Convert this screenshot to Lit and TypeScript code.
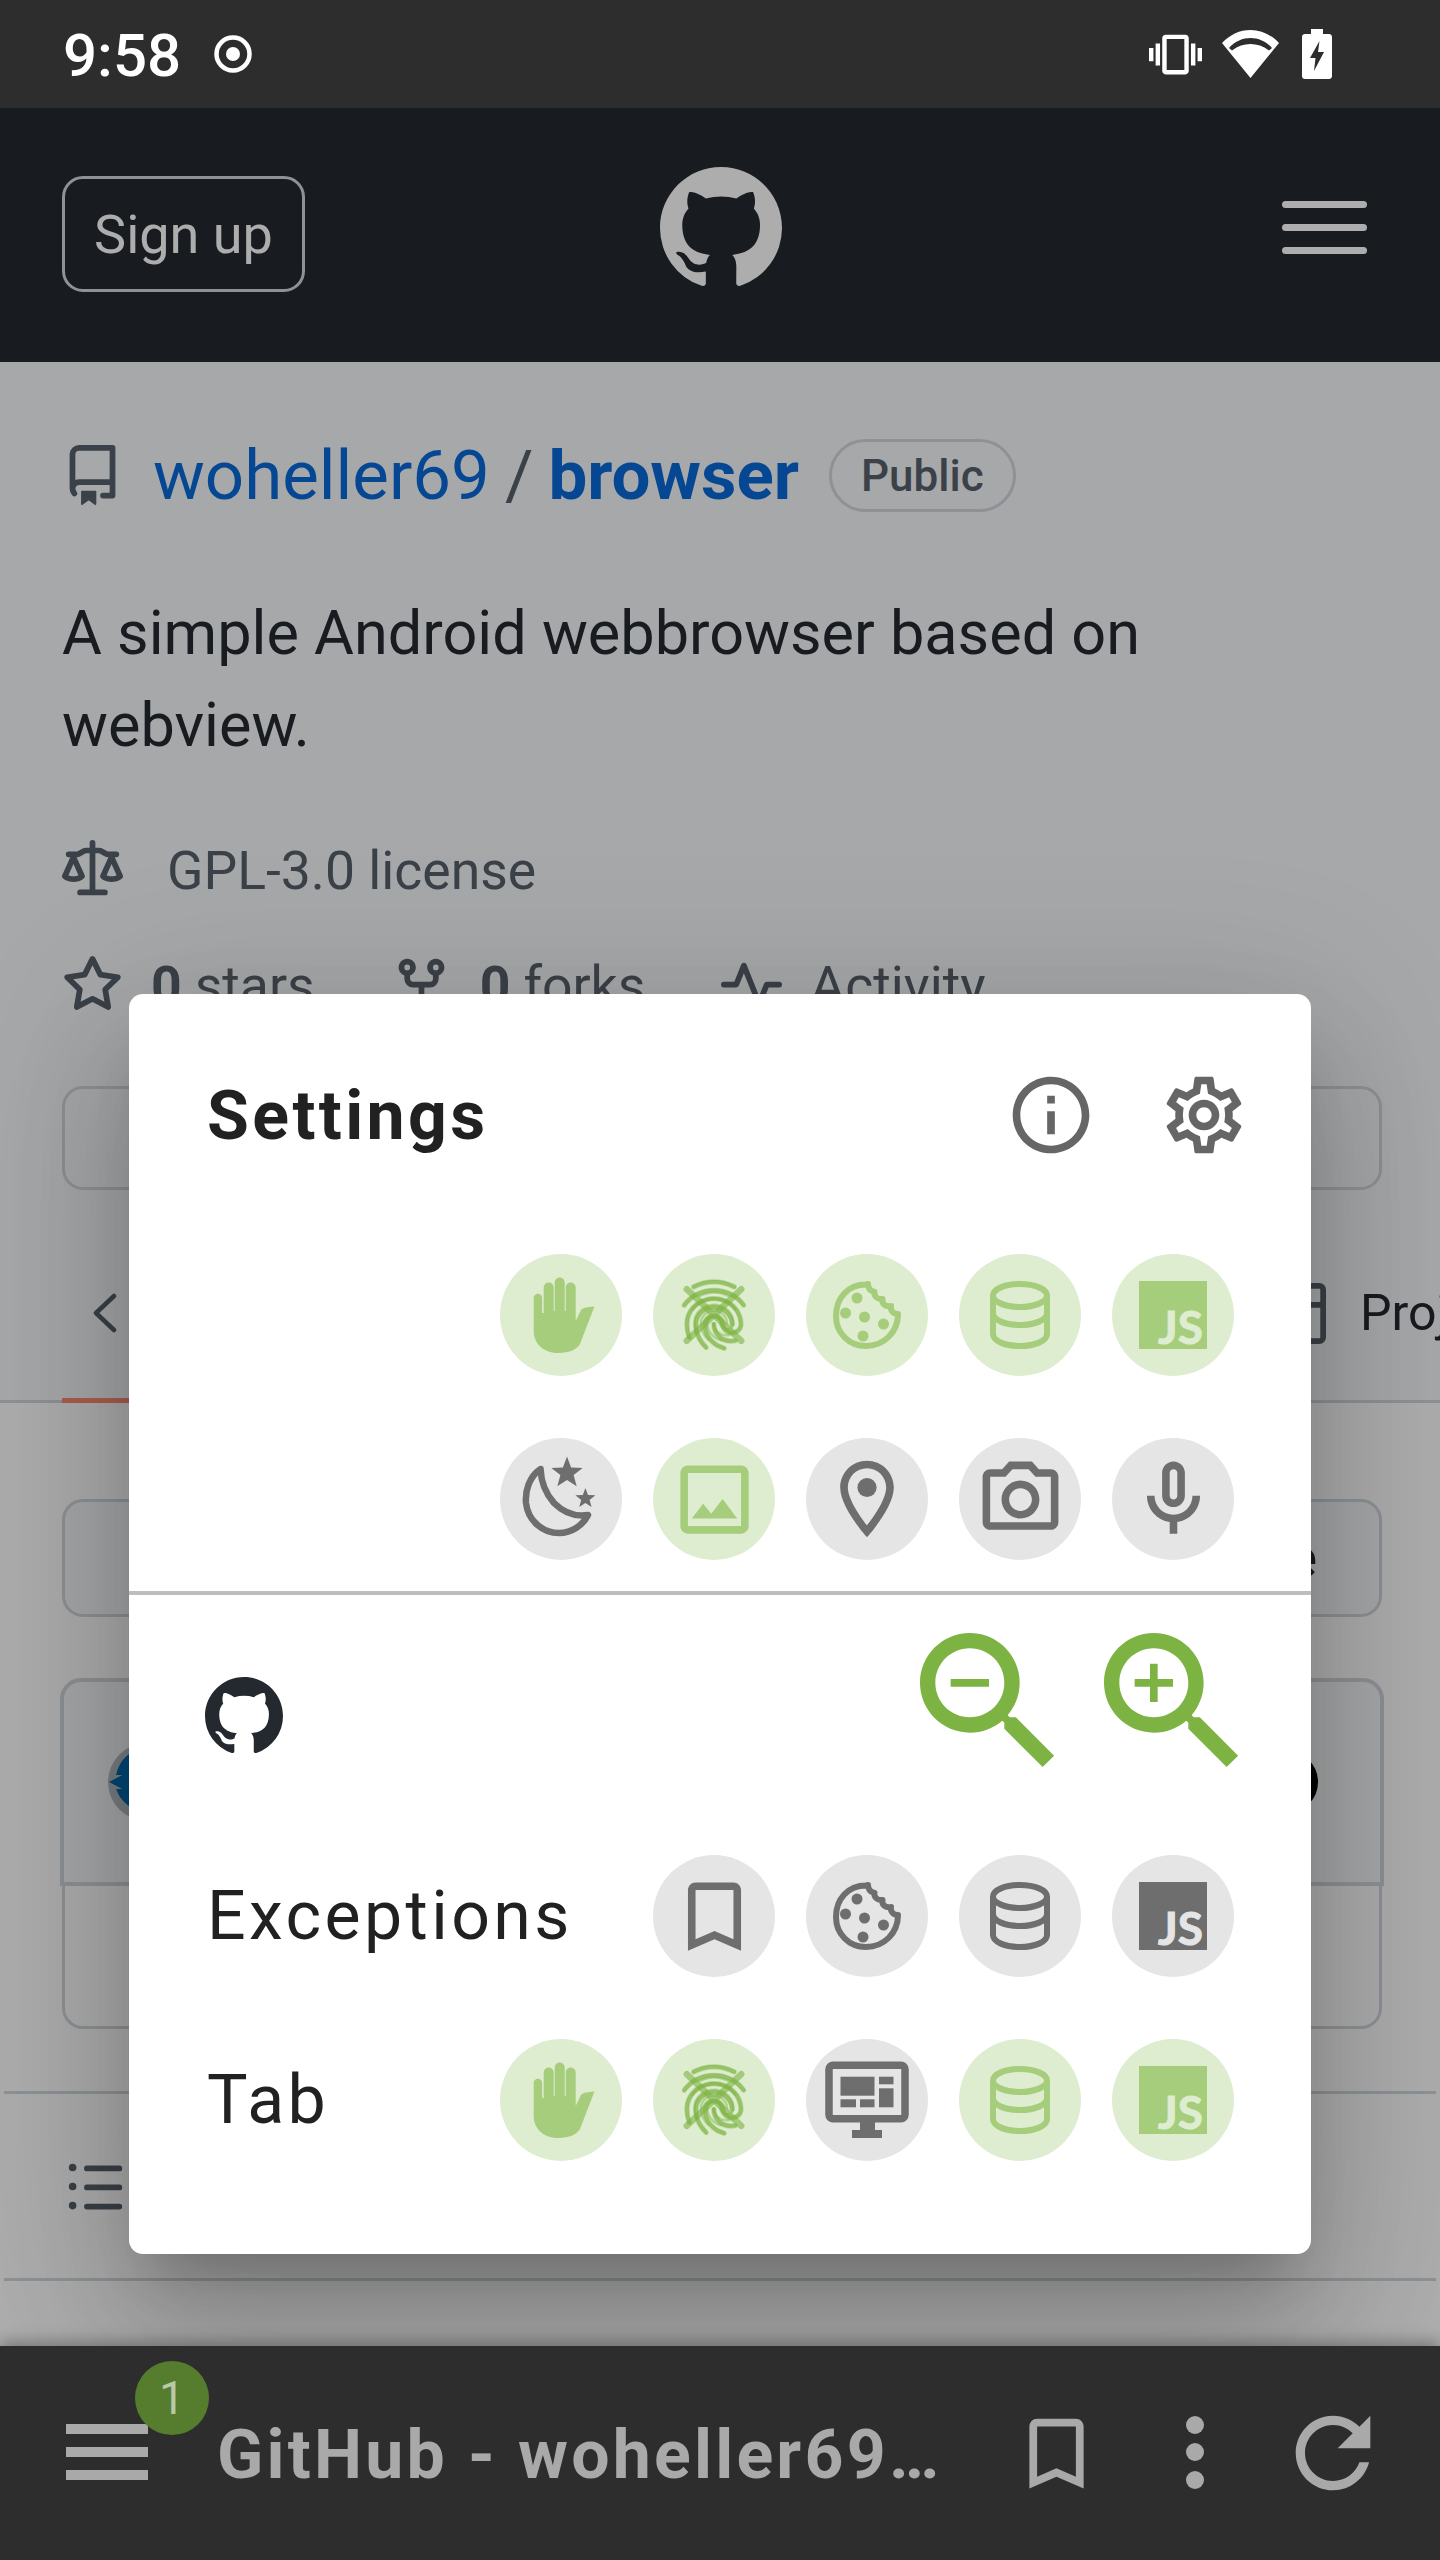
import { LitElement, html, css } from "lit";
import { customElement } from "lit/decorators.js";

const GH =
  "M8 0c4.42 0 8 3.58 8 8a8.013 8.013 0 0 1-5.45 7.59c-.4.08-.55-.17-.55-.38 0-.27.01-1.13.01-2.2 0-.75-.25-1.23-.54-1.48 1.78-.2 3.65-.88 3.65-3.95 0-.88-.31-1.59-.82-2.15.08-.2.36-1.02-.08-2.12 0 0-.67-.22-2.2.82-.64-.18-1.32-.27-2-.27-.68 0-1.36.09-2 .27-1.53-1.03-2.2-.82-2.2-.82-.44 1.1-.16 1.92-.08 2.12-.51.56-.82 1.28-.82 2.15 0 3.06 1.86 3.75 3.64 3.95-.23.2-.44.55-.51 1.07-.46.21-1.61.55-2.33-.66-.15-.24-.6-.83-1.23-.82-.67.01-.27.38.01.53.34.19.73.9.82 1.13.16.45.68 1.31 2.69.94 0 .67.01 1.3.01 1.49 0 .21-.15.45-.55.38A7.995 7.995 0 0 1 0 8c0-4.42 3.58-8 8-8Z";
const REPO =
  "M2 2.5A2.5 2.5 0 0 1 4.5 0h8.75a.75.75 0 0 1 .75.75v12.5a.75.75 0 0 1-.75.75h-2.5a.75.75 0 0 1 0-1.5h1.75v-2h-8a1 1 0 0 0-.714 1.7.75.75 0 1 1-1.072 1.05A2.495 2.495 0 0 1 2 11.5Zm10.5-1h-8a1 1 0 0 0-1 1v6.708A2.486 2.486 0 0 1 4.5 9h8ZM5 12.25a.25.25 0 0 1 .25-.25h3.5a.25.25 0 0 1 .25.25v3.25a.25.25 0 0 1-.4.2l-1.45-1.087a.249.249 0 0 0-.3 0L5.4 15.7a.25.25 0 0 1-.4-.2Z";
const LAW =
  "M8.75.75V2h.985c.304 0 .603.08.867.231l1.29.736c.038.022.08.033.124.033h2.234a.75.75 0 0 1 0 1.5h-.427l2.111 4.692a.75.75 0 0 1-.154.838l-.53-.53.529.531-.001.002-.002.002-.006.006-.006.005-.01.01-.045.04c-.21.176-.441.327-.686.45C14.556 10.78 13.88 11 13 11a4.498 4.498 0 0 1-2.023-.454 3.544 3.544 0 0 1-.686-.45l-.045-.04-.016-.015-.006-.006-.004-.004v-.001a.75.75 0 0 1-.154-.838L12.178 4.5h-.162c-.305 0-.604-.079-.868-.231l-1.29-.736a.245.245 0 0 0-.124-.033H8.75V13h2.5a.75.75 0 0 1 0 1.5h-6.5a.75.75 0 0 1 0-1.5h2.5V3.5h-.984a.245.245 0 0 0-.124.033l-1.289.737c-.265.15-.564.23-.869.23h-.162l2.112 4.692a.75.75 0 0 1-.154.838l-.53-.53.529.531-.001.002-.002.002-.006.006-.016.015-.045.04c-.21.176-.441.327-.686.45C4.556 10.78 3.88 11 3 11a4.498 4.498 0 0 1-2.023-.454 3.544 3.544 0 0 1-.686-.45l-.045-.04-.016-.015-.006-.006-.004-.004v-.001a.75.75 0 0 1-.154-.838L2.178 4.5H1.75a.75.75 0 0 1 0-1.5h2.234a.249.249 0 0 0 .125-.033l1.288-.737c.265-.15.564-.23.869-.23h.984V.75a.75.75 0 0 1 1.5 0Zm2.945 8.477c.285.135.718.273 1.305.273s1.02-.138 1.305-.273L13 6.327Zm-10 0c.285.135.718.273 1.305.273s1.02-.138 1.305-.273L3 6.327Z";
const STAR =
  "M8 .25a.75.75 0 0 1 .673.418l1.882 3.815 4.21.612a.75.75 0 0 1 .416 1.279l-3.046 2.97.719 4.192a.751.751 0 0 1-1.088.791L8 12.347l-3.766 1.98a.75.75 0 0 1-1.088-.79l.72-4.194L.818 6.374a.75.75 0 0 1 .416-1.28l4.21-.611L7.327.668A.75.75 0 0 1 8 .25Zm0 2.445L6.615 5.5a.75.75 0 0 1-.564.41l-3.097.45 2.24 2.184a.75.75 0 0 1 .216.664l-.528 3.084 2.769-1.456a.75.75 0 0 1 .698 0l2.77 1.456-.53-3.084a.75.75 0 0 1 .216-.664l2.24-2.183-3.096-.45a.75.75 0 0 1-.564-.41L8 2.694Z";
const FORK =
  "M5 5.372v.878c0 .414.336.75.75.75h4.5a.75.75 0 0 0 .75-.75v-.878a2.25 2.25 0 1 1 1.5 0v.878a2.25 2.25 0 0 1-2.25 2.25h-1.5v2.128a2.251 2.251 0 1 1-1.5 0V8.5h-1.5A2.25 2.25 0 0 1 3.5 6.25v-.878a2.25 2.25 0 1 1 1.5 0ZM5 3.25a.75.75 0 1 0-1.5 0 .75.75 0 0 0 1.5 0Zm6.75.75a.75.75 0 1 0 0-1.5.75.75 0 0 0 0 1.5Zm-3 8.75a.75.75 0 1 0-1.5 0 .75.75 0 0 0 1.5 0Z";
const PULSE =
  "M6 2c.306 0 .582.187.696.471L10 10.731l1.304-3.26A.751.751 0 0 1 12 7h3.25a.75.75 0 0 1 0 1.5h-2.742l-1.812 4.528a.751.751 0 0 1-1.392 0L6 4.77 4.696 8.03A.75.75 0 0 1 4 8.5H.75a.75.75 0 0 1 0-1.5h2.742l1.812-4.529A.751.751 0 0 1 6 2Z";
const LIST =
  "M5.75 2.5h8.5a.75.75 0 0 1 0 1.5h-8.5a.75.75 0 0 1 0-1.5Zm0 5h8.5a.75.75 0 0 1 0 1.5h-8.5a.75.75 0 0 1 0-1.5Zm0 5h8.5a.75.75 0 0 1 0 1.5h-8.5a.75.75 0 0 1 0-1.5ZM2 14a1 1 0 1 1 0-2 1 1 0 0 1 0 2Zm1-6a1 1 0 1 1-2 0 1 1 0 0 1 2 0ZM2 4a1 1 0 1 1 0-2 1 1 0 0 1 0 2Z";
const TABLE =
  "M0 1.75C0 .784.784 0 1.75 0h12.5C15.216 0 16 .784 16 1.75v12.5A1.75 1.75 0 0 1 14.25 16H1.75A1.75 1.75 0 0 1 0 14.25ZM6.5 6.5v8h7.75a.25.25 0 0 0 .25-.25V6.5Zm8-1.5V1.75a.25.25 0 0 0-.25-.25H6.5V5Zm-13 1.5v7.75c0 .138.112.25.25.25H5v-8ZM5 5V1.5H1.75a.25.25 0 0 0-.25.25V5Z";

const INFO =
  "M11 7h2v2h-2zm0 4h2v6h-2zm1-9C6.48 2 2 6.48 2 12s4.48 10 10 10 10-4.48 10-10S17.52 2 12 2zm0 18c-4.41 0-8-3.59-8-8s3.59-8 8-8 8 3.59 8 8-3.59 8-8 8z";
const GEAR =
  "M19.43 12.98c.04-.32.07-.64.07-.98 0-.34-.03-.66-.07-.98l2.11-1.65c.19-.15.24-.42.12-.64l-2-3.46c-.09-.16-.26-.25-.44-.25-.06 0-.12.01-.17.03l-2.49 1c-.52-.4-1.08-.73-1.69-.98l-.38-2.65C14.46 2.18 14.25 2 14 2h-4c-.25 0-.46.18-.49.42l-.38 2.65c-.61.25-1.17.59-1.69.98l-2.49-1c-.06-.02-.12-.03-.18-.03-.17 0-.34.09-.43.25l-2 3.46c-.13.22-.07.49.12.64l2.11 1.65c-.04.32-.07.65-.07.98 0 .33.03.66.07.98l-2.11 1.65c-.19.15-.24.42-.12.64l2 3.46c.09.16.26.25.44.25.06 0 .12-.01.17-.03l2.49-1c.52.4 1.08.73 1.69.98l.38 2.65c.03.24.24.42.49.42h4c.25 0 .46-.18.49-.42l.38-2.65c.61-.25 1.17-.59 1.69-.98l2.49 1c.06.02.12.03.18.03.17 0 .34-.09.43-.25l2-3.46c.12-.22.07-.49-.12-.64l-2.11-1.65zm-1.98-1.71c.04.31.05.52.05.73 0 .21-.02.43-.05.73l-.14 1.13.89.7 1.08.84-.7 1.21-1.27-.51-1.04-.42-.9.68c-.43.32-.84.56-1.25.73l-1.06.43-.16 1.13-.2 1.35h-1.4l-.19-1.35-.16-1.13-1.06-.43c-.43-.18-.83-.41-1.23-.71l-.91-.7-1.06.43-1.27.51-.7-1.21 1.08-.84.89-.7-.14-1.13c-.03-.31-.05-.54-.05-.74s.02-.43.05-.73l.14-1.13-.89-.7-1.08-.84.7-1.21 1.27.51 1.04.42.9-.68c.43-.32.84-.56 1.25-.73l1.06-.43.16-1.13.2-1.35h1.39l.19 1.35.16 1.13 1.06.43c.43.18.83.41 1.23.71l.91.7 1.06-.43 1.27-.51.7 1.21-1.07.85-.89.7.14 1.13zM12 8c-2.21 0-4 1.79-4 4s1.79 4 4 4 4-1.79 4-4-1.79-4-4-4zm0 6c-1.1 0-2-.9-2-2s.9-2 2-2 2 .9 2 2-.9 2-2 2z";
const FINGERPRINT =
  "M17.81 4.47c-.08 0-.16-.02-.23-.06C15.66 3.42 14 3 12.01 3c-1.98 0-3.86.47-5.58 1.41-.24.13-.54.04-.68-.2-.13-.24-.04-.55.2-.68C7.82 2.52 9.86 2 12.01 2c2.13 0 3.99.47 6.03 1.52.25.13.34.43.21.67-.09.18-.26.28-.44.28zM3.5 9.72c-.1 0-.2-.03-.29-.09-.23-.16-.28-.47-.12-.7.99-1.4 2.25-2.5 3.75-3.27C9.98 4.04 14 4.03 17.15 5.65c1.5.77 2.76 1.86 3.75 3.25.16.22.11.54-.12.7-.23.16-.54.11-.7-.12-.9-1.26-2.04-2.25-3.39-2.94-2.87-1.47-6.54-1.47-9.4.01-1.36.7-2.5 1.7-3.4 2.96-.08.14-.23.21-.39.21zm6.25 12.07c-.13 0-.26-.05-.35-.15-.87-.87-1.34-1.43-2.01-2.64-.69-1.23-1.05-2.73-1.05-4.34 0-2.97 2.54-5.39 5.66-5.39s5.66 2.42 5.66 5.39c0 .28-.22.5-.5.5s-.5-.22-.5-.5c0-2.42-2.09-4.39-4.66-4.39-2.57 0-4.66 1.97-4.66 4.39 0 1.44.32 2.77.93 3.85.64 1.15 1.08 1.64 1.85 2.42.19.2.19.51 0 .71-.11.1-.24.15-.37.15zm7.17-1.85c-1.19 0-2.24-.3-3.1-.89-1.49-1.01-2.38-2.65-2.38-4.39 0-.28.22-.5.5-.5s.5.22.5.5c0 1.41.72 2.74 1.94 3.56.71.48 1.54.71 2.54.71.24 0 .64-.03 1.04-.1.27-.05.53.13.58.41.05.27-.13.53-.41.58-.57.11-1.07.12-1.21.12zM14.91 22c-.04 0-.09-.01-.13-.02-1.59-.44-2.63-1.03-3.72-2.1-1.4-1.39-2.17-3.24-2.17-5.22 0-1.62 1.38-2.94 3.08-2.94 1.7 0 3.08 1.32 3.08 2.94 0 1.07.93 1.94 2.08 1.94s2.08-.87 2.08-1.94c0-3.77-3.25-6.83-7.25-6.83-2.84 0-5.44 1.58-6.61 4.03-.39.81-.59 1.76-.59 2.8 0 .78.07 2.01.67 3.61.1.26-.03.55-.29.64-.26.1-.55-.04-.64-.29-.49-1.31-.73-2.61-.73-3.96 0-1.2.23-2.29.68-3.24 1.33-2.79 4.28-4.6 7.51-4.6 4.55 0 8.25 3.51 8.25 7.83 0 1.62-1.38 2.94-3.08 2.94s-3.08-1.32-3.08-2.94c0-1.07-.93-1.94-2.08-1.94s-2.08.87-2.08 1.94c0 1.71.66 3.31 1.87 4.51.95.94 1.86 1.46 3.27 1.85.27.07.42.35.35.61-.05.23-.26.38-.47.38z";
const IMAGE =
  "M19 5v14H5V5h14m0-2H5c-1.1 0-2 .9-2 2v14c0 1.1.9 2 2 2h14c1.1 0 2-.9 2-2V5c0-1.1-.9-2-2-2zm-4.86 8.86l-3 3.87L9 13.14 6 17h12l-3.86-5.14z";
const PLACE =
  "M12 2C8.13 2 5 5.13 5 9c0 5.25 7 13 7 13s7-7.75 7-13c0-3.87-3.13-7-7-7zM7 9c0-2.76 2.24-5 5-5s5 2.24 5 5c0 2.88-2.88 7.19-5 9.88C9.92 16.21 7 11.85 7 9z";
const CAMERA =
  "M14.12 4l1.83 2H20v12H4V6h4.05l1.83-2h4.24M15 2H9L7.17 4H4c-1.1 0-2 .9-2 2v12c0 1.1.9 2 2 2h16c1.1 0 2-.9 2-2V6c0-1.1-.9-2-2-2h-3.17L15 2zm-3 7c1.65 0 3 1.35 3 3s-1.35 3-3 3-3-1.35-3-3 1.35-3 3-3m0-2c-2.76 0-5 2.24-5 5s2.24 5 5 5 5-2.24 5-5-2.24-5-5-5z";
const MIC =
  "M12 14c1.66 0 3-1.34 3-3V5c0-1.66-1.34-3-3-3S9 3.34 9 5v6c0 1.66 1.34 3 3 3zm-1-9c0-.55.45-1 1-1s1 .45 1 1v6c0 .55-.45 1-1 1s-1-.45-1-1V5zm6 6c0 2.76-2.24 5-5 5s-5-2.24-5-5H5c0 3.53 2.61 6.43 6 6.92V21h2v-3.08c3.39-.49 6-3.39 6-6.92h-2z";
const BOOKMARK = "M17 3H7c-1.1 0-2 .9-2 2v16l7-3 7 3V5c0-1.1-.9-2-2-2zm0 15l-5-2.18L7 18V5h10v13z";
const LENS =
  "M15.5 14h-.79l-.28-.27C15.41 12.59 16 11.11 16 9.5 16 5.91 13.09 3 9.5 3S3 5.91 3 9.5 5.91 16 9.5 16c1.61 0 3.09-.59 4.23-1.57l.27.28v.79l5 4.99L20.49 19l-4.99-5zm-6 0C7.01 14 5 11.99 5 9.5S7.01 5 9.5 5 14 7.01 14 9.5 11.99 14 9.5 14z";
const REFRESH =
  "M17.65 6.35C16.2 4.9 14.21 4 12 4c-4.42 0-7.99 3.58-7.99 8s3.57 8 7.99 8c3.73 0 6.84-2.55 7.73-6h-2.08c-.82 2.33-3.04 4-5.65 4-3.31 0-6-2.69-6-6s2.69-6 6-6c1.66 0 3.14.69 4.22 1.78L13 11h7V4l-2.35 2.35z";
const VIBRATE =
  "M0 15h2V9H0v6zm3 2h2V7H3v10zm19-8v6h2V9h-2zm-3 8h2V7h-2v10zM16.5 3h-9C6.67 3 6 3.67 6 4.5v15c0 .83.67 1.5 1.5 1.5h9c.83 0 1.5-.67 1.5-1.5v-15c0-.83-.67-1.5-1.5-1.5zM16 19H8V5h8v14z";

// 5 zackiger Stern, fuer das Nacht-Icon
function starPoints(cx: number, cy: number, r: number) {
  const pts: string[] = [];
  for (let i = 0; i < 10; i++) {
    const a = -Math.PI / 2 + (i * Math.PI) / 5;
    const rr = i % 2 ? r * 0.42 : r;
    pts.push(`${(cx + rr * Math.cos(a)).toFixed(1)},${(cy + rr * Math.sin(a)).toFixed(1)}`);
  }
  return pts.join(" ");
}

const mat = (d: string, size = 92) =>
  html`<svg width=${size} height=${size} viewBox="0 0 24 24" fill="currentColor"><path d=${d}></path></svg>`;
const oct = (d: string, size = 61) =>
  html`<svg class="oct" width=${size} height=${size} viewBox="0 0 16 16" fill="currentColor"><path d=${d}></path></svg>`;

const hand = html`<svg width="68" height="80" viewBox="47 44 68 80" fill="currentColor">
  <path
    d="M53.7 67a4.2 4.2 0 0 1 8.4 0V82h1.6V56.5a5 5 0 0 1 10 0V80h1V51.5a5 5 0 0 1 10 0V80h1V56.5a5 5 0 0 1 10 0V90L101 79C103 76.500 108 76 114.400 75.500L100 113C97 118 90 122 78 122 63 122 53.700 112 53.700 100Z"
  ></path>
</svg>`;
const fingerprint = html`<svg width="84" height="84" viewBox="0 0 24 24">
  <path d="M4.200 4.600 19.800 19.400M19.800 4.600 4.200 19.400" stroke="#7cb342" stroke-opacity=".6" stroke-width="1.800" stroke-linecap="round"></path>
  <path d=${FINGERPRINT} fill="#7cb342" fill-opacity=".7" stroke="#7cb342" stroke-opacity=".4" stroke-width=".5"></path>
  <path d=${FINGERPRINT} fill="#7cb342" fill-opacity=".45" transform="translate(12 13.500) scale(.72) translate(-12 -13.500)"></path>
</svg>`;
const cookie = html`<svg width="68" height="68" viewBox="0 0 68 68" fill="none" stroke="currentColor" stroke-width="6">
  <path
    d="M33 3.500C15 3.500 3 17 3 35c0 17 13 30 30 30 18 0 32-14 32-32-3 0-5-1-6-3-1.500-2-1.500-3-1-5-3 1-5 0-7-1.500-1.500-1.500-2-3-1.500-5.500-3 .5-5-.5-6.500-2-1.500-1.500-2-3-1.500-5-2-.5-4-1.500-5-3-1-1.500-1.500-3-1.500-5Z"
    stroke-linejoin="round"
  ></path>
  <g fill="currentColor" stroke="none">
    <circle cx="24" cy="17" r="5.500"></circle>
    <circle cx="12.500" cy="32" r="5.500"></circle>
    <circle cx="31.500" cy="36" r="5.500"></circle>
    <circle cx="50.500" cy="43" r="5.500"></circle>
    <circle cx="30" cy="55" r="5.500"></circle>
  </g>
</svg>`;
const db = html`<svg width="60" height="68" viewBox="0 0 60 68" fill="none" stroke="currentColor" stroke-width="6">
  <ellipse cx="30" cy="14.500" rx="27" ry="11.500"></ellipse>
  <path d="M3 14.500V53c0 7 12 12 27 12s27-5 27-12V14.500"></path>
  <path d="M3 32c0 7 12 12 27 12s27-5 27-12"></path>
</svg>`;
const js = html`<svg width="68" height="68" viewBox="0 0 68 68">
  <rect width="68" height="68" fill="currentColor"></rect>
  <text x="64" y="63" text-anchor="end" class="jst">JS</text>
</svg>`;
const moon = html`<svg width="92" height="92" viewBox="0 0 92 92" fill="currentColor">
  <path
    d="M25.600 16C14 24 10 38 11 50c2 18 17 30 33 30 13 0 24-8 29-18-13 2-25-3-34-12-8-9-13-21-13.400-34Z"
    fill="none"
    stroke="currentColor"
    stroke-width="6.500"
    stroke-linejoin="round"
  ></path>
  <polygon points=${starPoints(52, 20, 16.5)}></polygon>
  <polygon points=${starPoints(70.4, 45.5, 10.5)}></polygon>
</svg>`;
const place = html`<svg width="92" height="92" viewBox="0 0 24 24" fill="currentColor">
  <path d=${PLACE}></path>
  <circle cx="12" cy="9" r="2.500"></circle>
</svg>`;
const monitor = html`<svg width="92" height="92" viewBox="0 0 92 92" fill="currentColor">
  <rect x="8" y="11.300" width="76" height="53.400" rx="4" fill="none" stroke="currentColor" stroke-width="7.500"></rect>
  <rect x="39" y="68" width="15" height="9"></rect>
  <rect x="31" y="76" width="30" height="8"></rect>
  <rect x="19.500" y="22.700" width="34" height="19"></rect>
  <rect x="58" y="22.700" width="14.500" height="7.600"></rect>
  <rect x="58" y="34.300" width="14.500" height="19"></rect>
  <rect x="19.500" y="45.300" width="15.500" height="8"></rect>
  <rect x="39" y="45.300" width="14.500" height="8"></rect>
</svg>`;

const ICONS = {
  hand,
  fingerprint,
  cookie,
  db,
  js,
  moon,
  monitor,
  place,
  image: mat(IMAGE, 91),
  camera: mat(CAMERA, 91),
  mic: mat(MIC, 91),
  bookmark: mat(BOOKMARK, 91),
};
type IconName = keyof typeof ICONS;

@customElement("app-root")
export class AppRoot extends LitElement {
  static styles = css`
    :host {
      display: block;
      width: 1440px;
      height: 2560px;
      position: relative;
      overflow: hidden;
      font-family: Roboto, sans-serif;
      color: #24292f;
      background: #fff;
    }
    .root {
      display: flex;
      flex-direction: column;
      height: 100%;
    }
    svg {
      display: block;
      flex: none;
    }

    /* status bar */
    .status {
      height: 108px;
      flex: none;
      background: #2d2d2d;
      color: #fff;
      display: flex;
      align-items: center;
      padding: 0 108px 0 63px;
      box-sizing: border-box;
      position: relative;
      z-index: 3;
    }
    .time {
      font-size: 60px;
      font-weight: 500;
      line-height: 105px;
      margin-right: 33px;
      padding-top: 3px;
    }
    .status-right {
      margin-left: auto;
      display: flex;
      align-items: center;
      gap: 20px;
    }
    .wifi {
      margin-right: 3px;
    }

    /* github header */
    .gh-head {
      height: 254px;
      flex: none;
      background: #24292f;
      display: flex;
      align-items: center;
      padding: 0 73px 0 62px;
      box-sizing: border-box;
      color: #fff;
    }
    .signup {
      width: 243px;
      height: 116px;
      box-sizing: border-box;
      border: 3.5px solid #d0d7de;
      border-radius: 21px;
      margin-top: -2px;
      display: flex;
      align-items: center;
      justify-content: center;
      font-size: 54px;
    }
    .gh-logo {
      margin: -14px 0 0 355px;
    }
    .bars {
      display: flex;
      flex-direction: column;
      gap: 16px;
      width: 85px;
      margin: -15px 0 0 auto;
    }
    .bars span {
      height: 7px;
      border-radius: 4px;
      background: #fff;
    }

    /* page below */
    .sec1 {
      flex: none;
      height: 1041px;
      box-sizing: border-box;
      background: #f6f8fa;
      border-bottom: 3px solid #d0d7de;
      padding: 77px 58px 0 62px;
    }
    .repo-line {
      height: 73px;
      display: flex;
      align-items: center;
      font-size: 69px;
      white-space: nowrap;
    }
    .repo-line a {
      color: #0969da;
    }
    .repo-line b {
      color: #0969da;
      font-weight: 700;
    }
    .slash {
      color: #57606a;
      margin: 0 15px;
    }
    .public {
      margin-left: 30px;
      height: 73px;
      box-sizing: border-box;
      border: 3.5px solid #d0d7de;
      border-radius: 37px;
      padding: 0 29px;
      display: flex;
      align-items: center;
      font-size: 44px;
      font-weight: 500;
      color: #57606a;
    }
    .repo-ic {
      color: #57606a;
      margin-right: 30px;
    }
    .desc {
      margin: 75px 0 0;
      font-size: 61.2px;
      line-height: 92px;
    }
    .muted {
      color: #57606a;
      font-size: 53.5px;
      display: flex;
      align-items: center;
      height: 60px;
      white-space: nowrap;
    }
    .license {
      margin-top: 69px;
      gap: 44px;
    }
    .stats {
      margin-top: 55px;
    }
    .stats .oct {
      margin-right: 28px;
    }
    .stats strong {
      font-weight: 700;
      margin-right: 13px;
    }
    .stat {
      display: flex;
      align-items: center;
      margin-right: 76px;
    }
    .btn {
      box-sizing: border-box;
      border: 3.5px solid #d0d7de;
      border-radius: 21px;
      background: #f6f8fa;
    }
    .btn-star {
      margin-top: 71px;
      height: 104px;
    }
    .tabs {
      display: flex;
      height: 210px;
      align-items: flex-start;
      font-size: 50px;
      white-space: nowrap;
    }
    .tab-on {
      width: 1203px;
      height: 215px;
      flex: none;
      box-sizing: border-box;
      border-bottom: 7px solid #fd8c73;
      padding: 103px 0 0 31px;
    }
    .chev {
      color: #57606a;
    }
    .proj {
      display: flex;
      align-items: center;
      gap: 34px;
      margin-top: 93px;
      height: 60px;
    }
    .proj .oct {
      color: #57606a;
    }

    .sec2 {
      flex: 1;
      padding: 96px 58px 0 62px;
      background: #fff;
    }
    .btn-code {
      height: 118px;
      display: flex;
      align-items: center;
      justify-content: flex-end;
      padding-right: 62px;
      font-size: 56px;
      font-weight: 500;
      background: #f6f8fa;
    }
    .commit {
      margin: 61px -2px 0;
      height: 208px;
      box-sizing: border-box;
      border: 4px solid #d0d7de;
      border-radius: 21px 21px 0 0;
      background: #f6f8fa;
      display: flex;
      align-items: center;
      justify-content: space-between;
      padding: 0 62px 0 44px;
    }
    .ring {
      width: 62px;
      height: 62px;
      box-sizing: border-box;
      border: 9px solid #000;
      border-radius: 50%;
    }
    .files {
      height: 143px;
      box-sizing: border-box;
      border: 3.5px solid #d0d7de;
      border-top: 0;
      border-radius: 0 0 21px 21px;
    }
    .rule {
      height: 3px;
      background: #d0d7de;
      margin: 0 -54px 0 -58px;
    }
    .rule.first {
      margin-top: 62px;
    }
    .readme {
      height: 184px;
      display: flex;
      align-items: center;
      color: #57606a;
      margin-left: 3px;
    }

    /* bottom bar */
    .bottom {
      height: 214px;
      flex: none;
      background: #2d2d2d;
      color: #a9a9a9;
      position: relative;
      z-index: 3;
      display: flex;
      align-items: center;
      box-shadow: 0 -5px 14px rgba(0, 0, 0, 0.28);
      padding: 0 0 0 66px;
      box-sizing: border-box;
    }
    .menu {
      width: 82px;
      display: flex;
      flex-direction: column;
      gap: 13px;
      margin-top: -2px;
      flex: none;
    }
    .menu span {
      height: 10px;
      background: #a9a9a9;
    }
    .badge {
      position: absolute;
      left: 135px;
      top: 15px;
      width: 74px;
      height: 74px;
      border-radius: 50%;
      background: #567d2e;
      display: flex;
      align-items: center;
      justify-content: center;
      font-size: 46px;
      font-weight: 400;
      color: #b8c8a8;
    }
    .title {
      margin-left: 69px;
      width: 722px;
      font-size: 68px;
      font-weight: 700;
      letter-spacing: 3.2px;
      white-space: nowrap;
      flex: none;
      margin-top: 4px;
    }
    .b-mark {
      margin-left: 71px;
    }
    .dots {
      display: flex;
      flex-direction: column;
      gap: 9.5px;
      margin-left: 83px;
      margin-top: -2px;
    }
    .dots span {
      width: 18px;
      height: 18px;
      border-radius: 50%;
      background: #a9a9a9;
    }
    .b-refresh {
      margin-left: 73px;
    }

    /* dialog */
    .scrim {
      position: absolute;
      left: 0;
      right: 0;
      top: 108px;
      bottom: 214px;
      background: rgba(0, 0, 0, 0.32);
      z-index: 1;
      display: flex;
      justify-content: center;
      align-items: flex-end;
      padding-bottom: 92px;
      box-sizing: border-box;
    }
    .dialog {
      width: 1182px;
      height: 1260px;
      box-sizing: border-box;
      background: #fff;
      border-radius: 14px;
      box-shadow: 0 38px 52px -24px rgba(0, 0, 0, 0.2), 0 84px 133px 10px rgba(0, 0, 0, 0.14),
        0 31px 161px 28px rgba(0, 0, 0, 0.12);
      padding: 75px 0 0;
      color: #212121;
    }
    .row {
      display: flex;
      align-items: center;
      justify-content: space-between;
      padding: 0 77px 0 78px;
    }
    .label {
      font-size: 68px;
      letter-spacing: 3.4px;
      line-height: 92px;
      white-space: nowrap;
    }
    .head .label {
      font-weight: 700;
      line-height: 90px;
      padding-top: 2px;
    }
    .head .group {
      margin-right: -31px;
    }
    .group {
      display: flex;
      gap: 31px;
      margin-left: auto;
    }
    .cell {
      width: 122px;
      height: 92px;
      display: flex;
      align-items: center;
      justify-content: center;
      color: #666;
    }
    .circ {
      width: 122px;
      height: 122px;
      border-radius: 50%;
      background: #e5e5e5;
      color: #6e6e6e;
      display: flex;
      align-items: center;
      justify-content: center;
      --bg: #e5e5e5;
    }
    .circ.on {
      background: #deecd0;
      color: #a6cd7c;
      --bg: #deecd0;
    }
    .jst {
      font-family: Lato, sans-serif;
      font-weight: 700;
      font-size: 46px;
      fill: var(--bg);
      stroke: var(--bg);
      stroke-width: 1px;
    }
    .r1 {
      margin-top: 93px;
    }
    .r2 {
      margin-top: 62px;
    }
    .divider {
      height: 4px;
      background: #bdbdbd;
      margin-top: 31px;
    }
    .zoom-row {
      margin-top: 15px;
      height: 184px;
      padding-right: 46px;
    }
    .gh-small {
      color: #24292f;
      margin: 28px 0 0 -2px;
    }
    .zooms {
      display: flex;
      color: #7cb342;
    }
    .r3 {
      margin-top: 61px;
    }
  `;

  private circle(name: IconName, on = false) {
    return html`<div class="circ ${on ? "on" : ""}">${ICONS[name]}</div>`;
  }

  private lens(plus: boolean) {
    const mark = plus ? "M12 10h-2v2H9v-2H7V9h2V7h1v2h2v1z" : "M7 9h5v1H7z";
    return html`<svg width="184" height="184" viewBox="0 0 24 24" fill="currentColor">
      <path d=${LENS}></path>
      <path d=${mark}></path>
    </svg>`;
  }

  render() {
    return html`
      <div class="root">
        <div class="status">
          <span class="time">9:58</span>
          <svg width="38" height="38" viewBox="0 0 38 38" fill="none" stroke="#fff" stroke-width="4.500">
            <circle cx="19" cy="19" r="16.500"></circle>
            <circle cx="19" cy="19" r="7" fill="#fff" stroke="none"></circle>
          </svg>
          <div class="status-right">
            ${mat(VIBRATE, 53)}
            <svg class="wifi" width="57" height="48" viewBox="0 0 57 48" fill="#fff">
              <path
                fill-rule="evenodd"
                d="M28.500 48 0 13C8 4.500 18 0 28.500 0S49 4.500 57 13ZM7 18C13 11 21 8 28.500 8S44 11 50 18L47 20.500C41 16 35 14 28.500 14S16 16 10 20.500Z"
              ></path>
            </svg>
            <svg width="30" height="50" viewBox="0 0 30 50" fill="#fff">
              <path
                fill-rule="evenodd"
                d="M9 0h12v5h6c1.700 0 3 1.300 3 3v39c0 1.700-1.300 3-3 3H3c-1.700 0-3-1.300-3-3V8c0-1.700 1.300-3 3-3h6ZM17.500 12 8 29h5.500L12 42l10-19h-6Z"
              ></path>
            </svg>
          </div>
        </div>

        <div class="gh-head">
          <div class="signup">Sign up</div>
          <svg class="gh-logo" width="122" height="122" viewBox="0 0 16 16" fill="currentColor"><path d=${GH}></path></svg>
          <div class="bars"><span></span><span></span><span></span></div>
        </div>

        <div class="sec1">
          <div class="repo-line">
            <span class="repo-ic">${oct(REPO)}</span>
            <a>woheller69</a><span class="slash">/</span><b>browser</b>
            <span class="public">Public</span>
          </div>
          <p class="desc">A simple Android webbrowser based on<br />webview.</p>
          <div class="muted license">${oct(LAW)}<span>GPL-3.0 license</span></div>
          <div class="muted stats">
            <div class="stat">${oct(STAR)}<strong>0</strong>stars</div>
            <div class="stat">${oct(FORK)}<strong>0</strong>forks</div>
            <div class="stat">${oct(PULSE)}Activity</div>
          </div>
          <div class="btn btn-star"></div>
          <div class="tabs">
            <div class="tab-on">
              <svg class="chev" width="24" height="40" viewBox="0 0 24 40" fill="none" stroke="currentColor" stroke-width="4.500" stroke-linecap="round" stroke-linejoin="round">
                <path d="M21 3 3 20l18 17"></path>
              </svg>
            </div>
            <div class="proj">${oct(TABLE)}<span>Projects</span></div>
          </div>
        </div>

        <div class="sec2">
          <div class="btn btn-code">Code</div>
          <div class="commit">
            <svg width="78" height="78" viewBox="0 0 78 78">
              <circle cx="39" cy="39" r="39" fill="#b4bcc2"></circle>
              <path d="M39 4a35 35 0 0 1 35 28H8A35 35 0 0 1 39 4ZM8 46h66a35 35 0 0 1-66 0Z" fill="#006bb0"></path>
              <path d="M1 39 24 27v24Z" fill="#006bb0"></path>
            </svg>
            <div class="ring"></div>
          </div>
          <div class="files"></div>
          <div class="rule first"></div>
          <div class="readme">${oct(LIST)}</div>
          <div class="rule"></div>
        </div>

        <div class="bottom">
          <div class="menu"><span></span><span></span><span></span></div>
          <div class="badge">1</div>
          <div class="title">GitHub - woheller69…</div>
          <span class="b-mark">${mat(BOOKMARK, 93)}</span>
          <div class="dots"><span></span><span></span><span></span></div>
          <span class="b-refresh">${mat(REFRESH, 112)}</span>
        </div>
      </div>

      <div class="scrim">
        <div class="dialog">
          <div class="row head">
            <span class="label">Settings</span>
            <div class="group">
              <div class="cell">${mat(INFO)}</div>
              <div class="cell">${mat(GEAR)}</div>
            </div>
          </div>
          <div class="row r1">
            <div class="group">
              ${this.circle("hand", true)} ${this.circle("fingerprint", true)} ${this.circle("cookie", true)}
              ${this.circle("db", true)} ${this.circle("js", true)}
            </div>
          </div>
          <div class="row r2">
            <div class="group">
              ${this.circle("moon")} ${this.circle("image", true)} ${this.circle("place")} ${this.circle("camera")}
              ${this.circle("mic")}
            </div>
          </div>
          <div class="divider"></div>
          <div class="row zoom-row">
            <svg class="gh-small" width="78" height="78" viewBox="0 0 16 16" fill="currentColor"><path d=${GH}></path></svg>
            <div class="zooms">${this.lens(false)} ${this.lens(true)}</div>
          </div>
          <div class="row r3">
            <span class="label">Exceptions</span>
            <div class="group">
              ${this.circle("bookmark")} ${this.circle("cookie")} ${this.circle("db")} ${this.circle("js")}
            </div>
          </div>
          <div class="row r2">
            <span class="label">Tab</span>
            <div class="group">
              ${this.circle("hand", true)} ${this.circle("fingerprint", true)} ${this.circle("monitor")}
              ${this.circle("db", true)} ${this.circle("js", true)}
            </div>
          </div>
        </div>
      </div>
    `;
  }
}
